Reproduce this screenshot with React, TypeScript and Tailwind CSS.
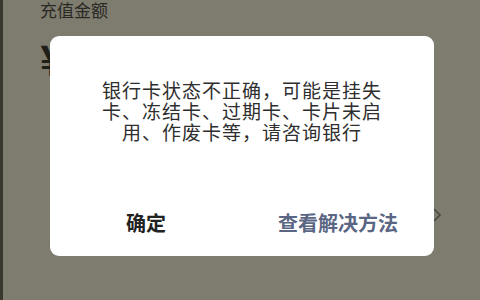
export default function App() {
  return (
    <div
      className="relative flex h-[300px] w-[480px] overflow-hidden bg-[#7e7b6f]"
      style={{ fontFamily: '"Noto Sans CJK SC", "Noto Sans", sans-serif' }}
    >
      <div className="w-[3px] shrink-0 bg-[#38382f]" />

      {/* page behind the mask */}
      <div className="flex flex-1 flex-col pl-[37px] pr-[38px]">
        <div className="mt-[1px] text-[17px] leading-[18px] text-[#2a2924]">充值金额</div>
        <div className="mt-[17px] text-[42px] font-bold leading-[44px] text-[#1f1f1a]">¥</div>
        <div className="mt-[127px] flex justify-end">
          <svg width="10" height="16" viewBox="0 0 10 16">
            <path d="M2 2 L8 8 L2 14" fill="none" stroke="#4a4840" strokeWidth="1.6" />
          </svg>
        </div>
      </div>

      {/* dialog */}
      <div className="absolute left-[50px] top-[36px] flex h-[220px] w-[384px] flex-col rounded-[9px] bg-white">
        <p className="pt-[43px] text-center text-[19px] leading-[21px] tracking-[1px] text-[#2e2e2e]">
          银行卡状态不正确，可能是挂失
          <br />
          卡、冻结卡、过期卡、卡片未启
          <br />
          用、作废卡等，请咨询银行
        </p>
        <div className="mt-auto grid h-[66px] grid-cols-2">
          <button className="text-[20px] font-bold text-[#222222]">确定</button>
          <button className="text-[20px] font-bold text-[#5a6683]">查看解决方法</button>
        </div>
      </div>
    </div>
  );
}
